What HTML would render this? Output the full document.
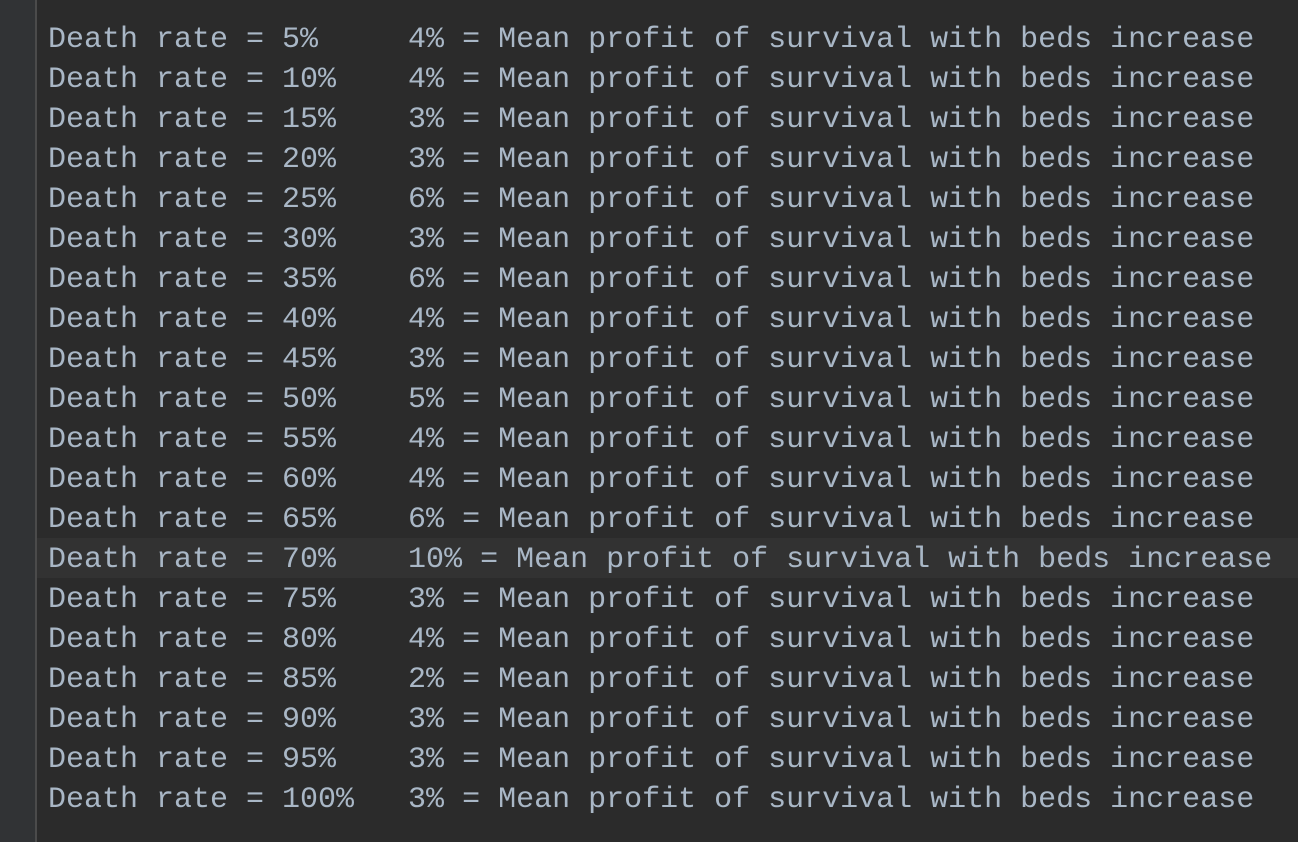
<!DOCTYPE html>
<html><head><style>
html,body{margin:0;padding:0;width:1298px;height:842px;overflow:hidden;background:#2b2b2b}
.g{position:absolute;left:0;top:0;width:35px;height:842px;background:#313335;border-right:2px solid #4b4b4b}
.c{position:absolute;left:48px;top:20px;font-family:"Liberation Mono",monospace;font-size:30px;color:#a9b7c6;white-space:pre}
.l{height:40px;line-height:40px}
.h{position:absolute;left:37px;right:0;top:538px;height:40px;background:#323232}
</style></head><body>
<div class="g"></div><div class="h"></div>
<div class="c"><div class="l">Death rate = 5%     4% = Mean profit of survival with beds increase</div><div class="l">Death rate = 10%    4% = Mean profit of survival with beds increase</div><div class="l">Death rate = 15%    3% = Mean profit of survival with beds increase</div><div class="l">Death rate = 20%    3% = Mean profit of survival with beds increase</div><div class="l">Death rate = 25%    6% = Mean profit of survival with beds increase</div><div class="l">Death rate = 30%    3% = Mean profit of survival with beds increase</div><div class="l">Death rate = 35%    6% = Mean profit of survival with beds increase</div><div class="l">Death rate = 40%    4% = Mean profit of survival with beds increase</div><div class="l">Death rate = 45%    3% = Mean profit of survival with beds increase</div><div class="l">Death rate = 50%    5% = Mean profit of survival with beds increase</div><div class="l">Death rate = 55%    4% = Mean profit of survival with beds increase</div><div class="l">Death rate = 60%    4% = Mean profit of survival with beds increase</div><div class="l">Death rate = 65%    6% = Mean profit of survival with beds increase</div><div class="l">Death rate = 70%    10% = Mean profit of survival with beds increase</div><div class="l">Death rate = 75%    3% = Mean profit of survival with beds increase</div><div class="l">Death rate = 80%    4% = Mean profit of survival with beds increase</div><div class="l">Death rate = 85%    2% = Mean profit of survival with beds increase</div><div class="l">Death rate = 90%    3% = Mean profit of survival with beds increase</div><div class="l">Death rate = 95%    3% = Mean profit of survival with beds increase</div><div class="l">Death rate = 100%   3% = Mean profit of survival with beds increase</div></div>
</body></html>
